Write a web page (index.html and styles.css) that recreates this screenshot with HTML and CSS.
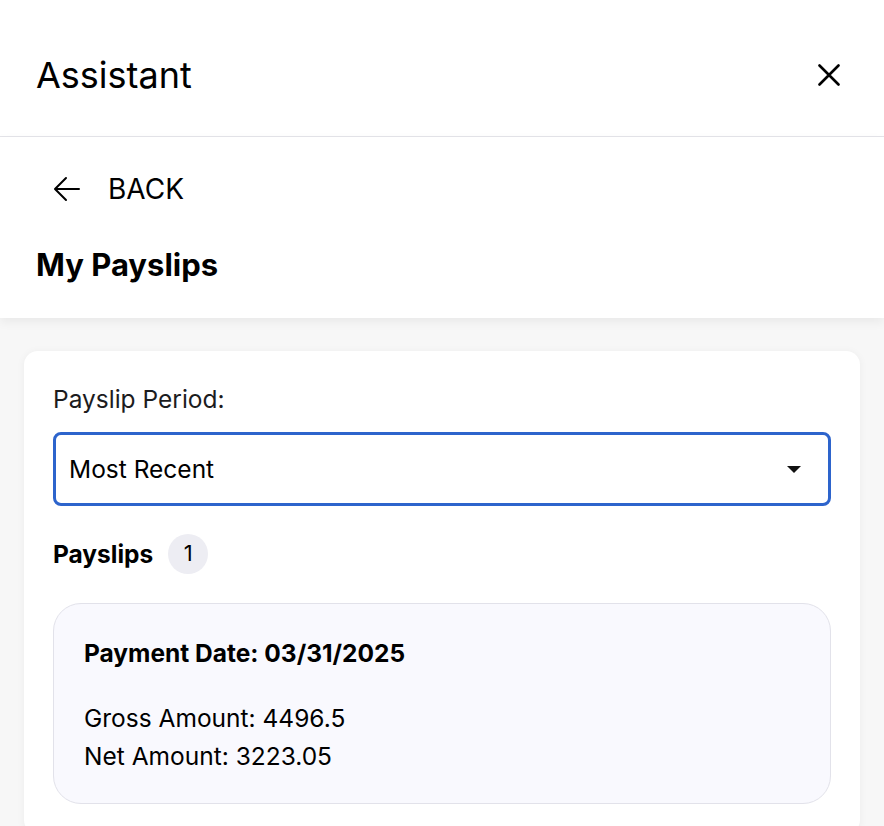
FILE: index.html
```html
<!DOCTYPE html>
<html lang="en">
<head>
    <meta charset="UTF-8">
    <meta name="viewport" content="width=device-width, initial-scale=1.0">
    <title>Assistant</title>
    <link rel="stylesheet" href="styles.css">
</head>
<body>

<header class="top-bar">
    <h1 class="top-title">Assistant</h1>
    <button class="close-btn" aria-label="Close">
        <svg width="22" height="22" viewBox="0 0 22 22">
            <path d="M1.5 1.5 L20.5 20.5 M20.5 1.5 L1.5 20.5" stroke="#000" stroke-width="2.6" stroke-linecap="round" fill="none"/>
        </svg>
    </button>
</header>

<!-- Page heading -->
<div class="page-head">
    <a class="back-link" href="#">
        <svg width="28" height="26" viewBox="0 0 28 26">
            <path d="M26 13 H3 M13 2 L2 13 L13 24" stroke="#000" stroke-width="2" stroke-linecap="round" stroke-linejoin="round" fill="none"/>
        </svg>
        <span>BACK</span>
    </a>
    <h2 class="page-title">My Payslips</h2>
</div>

<main class="content">
    <div class="card">
        <label class="field-label" for="period">Payslip Period:</label>
        <div class="select-box">
            <span id="period">Most Recent</span>
            <span class="caret"></span>
        </div>

        <div class="list-head">
            <span>Payslips</span>
            <span class="count">1</span>
        </div>

        <div class="payslip">
            <p class="pay-date">Payment Date: 03/31/2025</p>
            <p class="amount gross">Gross Amount: 4496.5</p>
            <p class="amount">Net Amount: 3223.05</p>
        </div>
    </div>
</main>

</body>
</html>
```

FILE: styles.css
```css
html, body {
    margin: 0;
    height: 100%;
}

body {
    font-family: Inter, "Noto Sans", sans-serif;
    color: #000;
    background-color: #f7f7f7;
}

.top-bar {
    display: flex;
    align-items: center;
    justify-content: space-between;
    box-sizing: border-box;
    height: 137px;
    padding: 14px 44px 0 36px;
    background-color: #fff;
    border-bottom: 1px solid #e4e4e9;
}

.top-title {
    margin: 0;
    font-size: 36px;
    line-height: 40px;
    font-weight: 400;
}

.close-btn {
    background: none;
    border: none;
    padding: 0;
    display: flex;
}

.page-head {
    background-color: #fff;
    padding: 30px 36px 35px;
    box-shadow: 0 4px 10px rgba(0, 0, 0, 0.06);
    position: relative; /* keep shadow above the grey area */
}

.back-link {
    display: flex;
    align-items: center;
    gap: 27px;
    padding-left: 17px;
    color: #000;
    text-decoration: none;
    font-size: 28px;
    height: 44px;
}

.page-title {
    margin: 36px 0 0;
    font-size: 31px;
    font-weight: 700;
    line-height: 36px;
}

.content {
    padding: 33px 24px;
}

.card {
    background-color: #fff;
    border-radius: 14px;
    padding: 33px 29px 30px;
    box-shadow: 0 1px 8px rgba(0, 0, 0, 0.05);
}

.field-label {
    display: block;
    font-size: 24.5px;
    color: #1c1c1e;
    line-height: 30px;
}

.select-box {
    display: flex;
    align-items: center;
    justify-content: space-between;
    box-sizing: border-box;
    margin-top: 18px;
    height: 74px;
    padding: 0 27px 0 13px;
    border: 3px solid #2d64cc;
    border-radius: 8px;
    font-size: 24.5px;
}

.caret {
    width: 0;
    height: 0;
    border-left: 7px solid transparent;
    border-right: 7px solid transparent;
    border-top: 7px solid #111;
}

.list-head {
    display: flex;
    align-items: center;
    gap: 15px;
    margin-top: 28px;
    font-size: 24.5px;
    line-height: 30px;
    font-weight: 700;
}

.count {
    display: flex;
    align-items: center;
    justify-content: center;
    width: 40px;
    height: 40px;
    border-radius: 50%;
    background-color: #ededf3;
    font-weight: 400;
    font-size: 22px;
    padding-bottom: 3px;
    box-sizing: border-box;
}

.payslip {
    margin-top: 29px;
    padding: 34px 30px 28px;
    background-color: #f9f9fe;
    border: 1px solid #e2e2ea;
    border-radius: 28px;
}

.payslip p {
    margin: 0;
    font-size: 24.5px;
    line-height: 38px;
}

.payslip .pay-date {
    font-weight: 700;
    line-height: 30px;
}

.payslip .gross {
    margin-top: 31px;
}
```
